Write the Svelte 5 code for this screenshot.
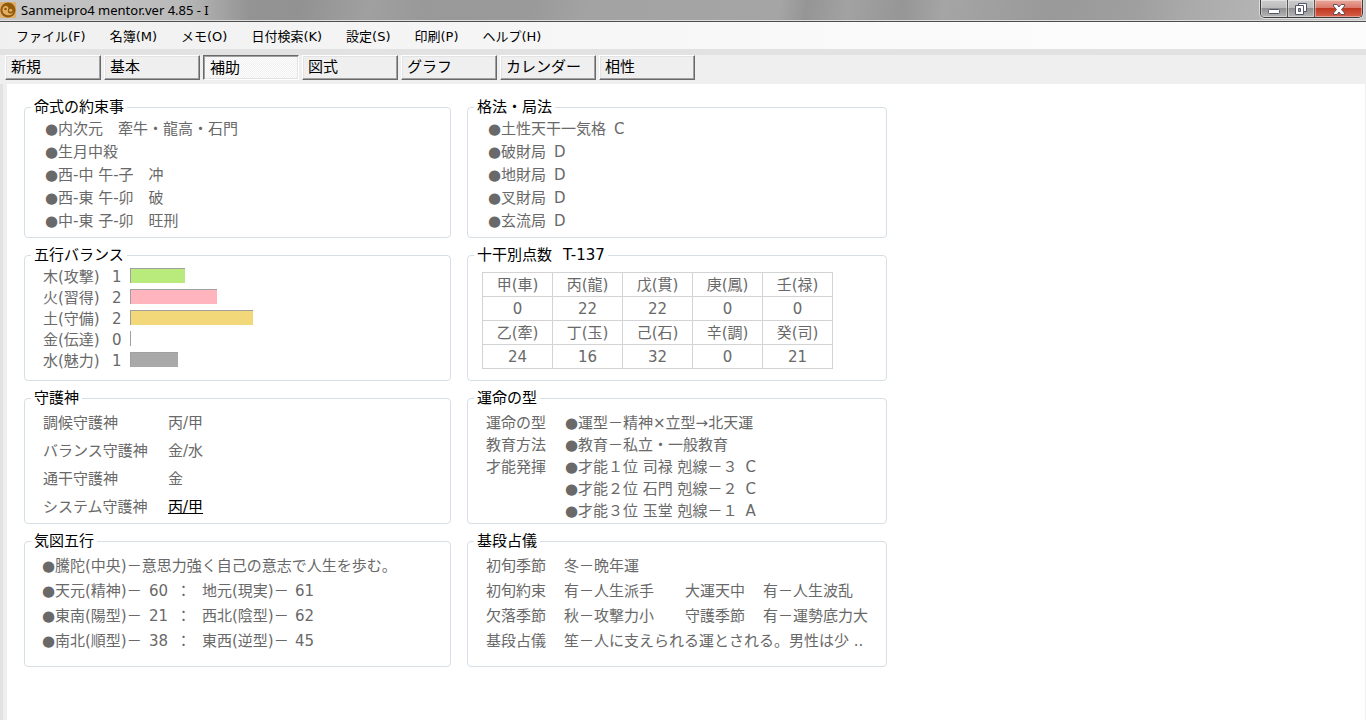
<script>
  const menus = ['ファイル(F)', '名簿(M)', 'メモ(O)', '日付検索(K)', '設定(S)', '印刷(P)', 'ヘルプ(H)'];
  const tabs = ['新規', '基本', '補助', '図式', 'グラフ', 'カレンダー', '相性'];
  let active = $state('補助');

  const promises = ['内次元　牽牛・龍高・石門', '生月中殺', '西-中 午-子　冲', '西-東 午-卯　破', '中-東 子-卯　旺刑'];
  const patterns = [
    ['土性天干一気格', 'C'],
    ['破財局', 'D'],
    ['地財局', 'D'],
    ['叉財局', 'D'],
    ['玄流局', 'D']
  ];
  const balance = [
    { name: '木(攻撃)', count: 1, size: 55, color: '#b9eb7c' },
    { name: '火(習得)', count: 2, size: 87, color: '#ffb4be' },
    { name: '土(守備)', count: 2, size: 123, color: '#f2d879' },
    { name: '金(伝達)', count: 0, size: 1, color: '#ffffff' },
    { name: '水(魅力)', count: 1, size: 48, color: '#a9a9a9' }
  ];
  const scores = [
    ['甲(車)', '丙(龍)', '戊(貫)', '庚(鳳)', '壬(禄)'],
    [0, 22, 22, 0, 0],
    ['乙(牽)', '丁(玉)', '己(石)', '辛(調)', '癸(司)'],
    [24, 16, 32, 0, 21]
  ];
  const guardians = [
    ['調候守護神', '丙/甲'],
    ['バランス守護神', '金/水'],
    ['通干守護神', '金'],
    ['システム守護神', '丙/甲']
  ];
  const fate = [
    ['運命の型', '運型－精神×立型→北天運', ''],
    ['教育方法', '教育－私立・一般教育', ''],
    ['才能発揮', '才能１位 司禄 剋線－３', 'C'],
    ['', '才能２位 石門 剋線－２', 'C'],
    ['', '才能３位 玉堂 剋線－１', 'A']
  ];
  const energy = [
    ['天元(精神)－', 60, '地元(現実)－', 61],
    ['東南(陽型)－', 21, '西北(陰型)－', 62],
    ['南北(順型)－', 38, '東西(逆型)－', 45]
  ];
  const stages = [
    ['初旬季節', '冬－晩年運'],
    ['初旬約束', '有－人生派手', '大運天中', '有－人生波乱'],
    ['欠落季節', '秋－攻撃力小', '守護季節', '有－運勢底力大'],
    ['基段占儀', '笙－人に支えられる運とされる。男性は少 ..']
  ];
</script>

{#snippet dot()}<span class="dot">●</span>{/snippet}

<div class="window">
  <header class="titlebar">
    <svg class="logo" width="16" height="16" viewBox="0 0 16 16" aria-hidden="true">
      <rect width="16" height="16" fill="#dcae74" />
      <circle cx="8" cy="8" r="7.6" fill="#945a05" />
      <path d="M2.500 8.500C2.300 5 4.500 3.500 6.500 4c2 .5 2.300 2.500 1.500 4-.8 1.600.2 3.600 2.500 3.600 1.800 0 3-1.200 3.300-2.600C13.500 12 11 13.500 8 13.300 5 13 2.700 11.300 2.500 8.500z" fill="#e2b06c" />
      <circle cx="5.500" cy="7" r="1.300" fill="#945a05" />
      <circle cx="10.700" cy="8.200" r="1.500" fill="#e2b06c" />
    </svg>
    <span class="title">Sanmeipro4 mentor.ver 4.85 - I</span>
    <div class="controls">
      <button aria-label="最小化">
        <svg width="14" height="14" viewBox="0 0 14 14"><rect x="1.500" y="7.500" width="11" height="4" rx="1" fill="#fff" stroke="#50566a" /></svg>
      </button>
      <button aria-label="元に戻す">
        <svg width="14" height="14" viewBox="0 0 14 14">
          <path d="M4.500 1.500h8v8h-8z" fill="#fff" stroke="#50566a" />
          <path d="M1.500 3.500h8v9h-8z" fill="#fff" stroke="#50566a" />
          <path d="M4.500 6.500h2v3h-2z" fill="#aaa" stroke="#50566a" />
        </svg>
      </button>
      <button class="close" aria-label="閉じる">
        <svg width="14" height="14" viewBox="0 0 14 14"><path d="M1.500 2.500h3.500l2 2.500 2-2.500h3.500v1.500l-3 3.500 3 3.500v1.500H9L7 10l-2 2.500H1.500V11l3-3.500-3-3.500z" fill="#fff" stroke="#5a5060" /></svg>
      </button>
    </div>
  </header>

  <nav class="menubar">
    {#each menus as m}<button>{m}</button>{/each}
  </nav>

  <div class="toolbar">
    {#each tabs as t}
      <button class:pressed={active === t} aria-pressed={active === t} onclick={() => (active = t)}>{t}</button>
    {/each}
  </div>

  <main>
    <div class="panels">
      <fieldset>
        <legend>命式の約束事</legend>
        <ul class="notes">
          {#each promises as p}<li>{@render dot()}{p}</li>{/each}
        </ul>
      </fieldset>

      <fieldset>
        <legend>格法・局法</legend>
        <ul class="notes">
          {#each patterns as [name, rank]}<li>{@render dot()}{name}<span class="rank">{rank}</span></li>{/each}
        </ul>
      </fieldset>

      <fieldset>
        <legend>五行バランス</legend>
        <div class="balance">
          {#each balance as b}
            <span>{b.name}</span>
            <span>{b.count}</span>
            <div class="bar" style="width: {b.size}px; background: {b.color}"></div>
          {/each}
        </div>
      </fieldset>

      <fieldset>
        <legend>十干別点数<span class="total">T-137</span></legend>
        <table>
          <tbody>
            {#each scores as row, i}
              <tr>
                {#each row as cell}
                  {#if i % 2 === 0}<th>{cell}</th>{:else}<td>{cell}</td>{/if}
                {/each}
              </tr>
            {/each}
          </tbody>
        </table>
      </fieldset>

      <fieldset>
        <legend>守護神</legend>
        <dl class="guardians">
          {#each guardians as [name, value], i}
            <dt>{name}</dt>
            <dd><span class:strong={i === 3}>{value}</span></dd>
          {/each}
        </dl>
      </fieldset>

      <fieldset>
        <legend>運命の型</legend>
        <dl class="fate">
          {#each fate as [name, text, rank]}
            <dt>{name}</dt>
            <dd>{@render dot()}{text}{#if rank}<span class="rank">{rank}</span>{/if}</dd>
          {/each}
        </dl>
      </fieldset>

      <fieldset>
        <legend>気図五行</legend>
        <div class="energy">
          <p>{@render dot()}騰陀(中央)－意思力強く自己の意志で人生を歩む。</p>
          {#each energy as [a, av, b, bv]}
            <span>{@render dot()}{a}</span>
            <span>{av}</span>
            <span>：</span>
            <span>{b}</span>
            <span>{bv}</span>
          {/each}
        </div>
      </fieldset>

      <fieldset>
        <legend>基段占儀</legend>
        <div class="stages">
          {#each stages as row}
            {#each row as cell, i}
              <span class:wide={row.length === 2 && i === 1}>{cell}</span>
            {/each}
          {/each}
        </div>
      </fieldset>
    </div>
  </main>
</div>

<style>
  :global(body) {
    margin: 0;
    background: #fff;
  }
  .window,
  .window button {
    font-family: 'DejaVu Sans', 'Noto Sans CJK JP', sans-serif;
  }
  .window {
    display: flex;
    flex-direction: column;
    min-height: 100vh;
    font-size: 15px;
    color: #696969;
  }
  .titlebar {
    display: flex;
    align-items: center;
    gap: 5px;
    height: 20px;
    border-bottom: 1px solid #ddd;
    box-shadow: 0 1px 0 #4f4f4f;
    margin-bottom: 1px;
    background:
      linear-gradient(90deg, rgba(205, 205, 205, 0.9) 0, rgba(195, 195, 195, 0.8) 180px, rgba(180, 180, 180, 0) 250px),
      linear-gradient(100deg, #999 0, #929292 22%, #a0a0a0 27%, #999 31%, #9a9a9a 39%, #a3a3a3 43%, #a5a5a5 57%, #959595 59%, #a2a2a2 62%, #969696 66%, #a5a5a5 69%, #999 77%, #9f9f9f 83%, #aaa 87%, #b4b4b4 92%, #c8c8c8 100%);
  }
  .title {
    font-family: 'Noto Sans', 'Noto Sans CJK JP', sans-serif;
    font-size: 13px;
    line-height: 20px;
    color: #000;
  }
  .controls {
    display: flex;
    align-self: flex-start;
    margin-left: auto;
    margin-right: 3px;
    border: 1px solid #3c3c3c;
    border-top: 0;
    border-radius: 0 0 5px 5px;
    overflow: hidden;
    box-shadow: 0 0 0 1px #ddd;
  }
  .controls button {
    display: flex;
    align-items: center;
    justify-content: center;
    width: 27px;
    height: 17px;
    padding: 0;
    border: 0;
    border-right: 1px solid #555;
    background: linear-gradient(#ccc 0, #bbb 48%, #919191 50%, #b5b5b5 100%);
    box-shadow: inset 0 0 0 1px rgba(255, 255, 255, 0.4);
  }
  .controls .close {
    width: 47px;
    border-right: 0;
    background: linear-gradient(#e9a99b 0, #d9776a 48%, #c03820 50%, #d8604a 100%);
  }
  .menubar {
    display: flex;
    gap: 24px;
    height: 27px;
    padding-left: 16px;
    background: linear-gradient(90deg, #f0f0f0, #fcfcfc 80%);
  }
  .menubar button {
    padding: 0;
    border: 0;
    background: none;
    font-size: 13px;
    color: #000;
    white-space: nowrap;
  }
  .toolbar {
    display: flex;
    gap: 3px;
    height: 29px;
    padding-left: 5px;
    border-top: 6px solid #e2e2e2;
    background: #efefef;
  }
  .toolbar button {
    width: 96px;
    height: 25px;
    padding: 0 5px 2px;
    border: 1px solid;
    border-color: #fff #696969 #696969 #fff;
    background: #efefef;
    box-shadow: inset -1px -1px 0 #a0a0a0, inset 1px 1px 0 #e3e3e3;
    font-size: 15px;
    line-height: 20px;
    text-align: left;
    color: #000;
  }
  .toolbar .pressed {
    padding: 0 5px 0 6px;
    border-color: #696969 #fff #fff #696969;
    background: repeating-conic-gradient(#efefef 0 25%, #fff 0 50%) 0 0 / 2px 2px;
    box-shadow: inset 1px 1px 0 #a0a0a0, inset -1px -1px 0 #e3e3e3;
  }
  main {
    flex: 1;
    margin-left: 3px;
    padding: 13px 17px 17px;
    border-left: 4px solid #efefef;
    border-right: 1px solid #efefef;
    box-shadow: -3px 0 0 #e2e2e2;
    background: #fff;
  }
  .panels {
    display: grid;
    grid-template-columns: 427fr 420fr;
    gap: 7px 16px;
    max-width: 863px;
  }
  fieldset {
    min-width: 0;
    margin: 0;
    padding: 0;
    border: 1px solid #d5dfe5;
    border-radius: 4px;
    white-space: nowrap;
  }
  legend {
    margin-left: 6px;
    padding: 0 3px;
    line-height: 20px;
    color: #000;
  }
  .total {
    margin-left: 11px;
  }
  ul,
  dl,
  p {
    margin: 0;
    padding: 0;
    list-style: none;
  }
  dd {
    margin: 0;
  }
  .dot {
    display: inline-block;
    width: 13px;
  }
  .rank {
    margin-left: 8px;
  }
  .notes {
    padding: 1px 0 4px 20px;
    line-height: 23px;
  }
  .balance {
    display: grid;
    grid-template-columns: 69px 18px 1fr;
    padding: 2px 0 8px 18px;
    line-height: 21px;
  }
  .bar {
    box-sizing: border-box;
    height: 15px;
    margin-top: 1px;
    border-top: 1px solid #a0a0a0;
    border-left: 1px solid #a0a0a0;
  }
  table {
    margin: 7px 0 11px 14px;
    border-collapse: collapse;
    table-layout: fixed;
    width: 351px;
  }
  th,
  td {
    height: 23px;
    padding: 2px 0 0;
    border: 1px solid #d3d3d3;
    box-sizing: border-box;
    font-weight: 400;
    line-height: 21px;
    text-align: center;
  }
  .guardians {
    display: grid;
    grid-template-columns: 125px 1fr;
    padding: 1px 0 2px 18px;
    line-height: 28px;
  }
  .strong {
    color: #000;
    text-decoration: underline;
  }
  .fate {
    display: grid;
    grid-template-columns: 79px 1fr;
    grid-auto-rows: 22px;
    padding: 4px 0 1px 18px;
    line-height: 22px;
  }
  .energy {
    display: grid;
    grid-template-columns: 107px 27px 26px 93px 1fr;
    padding: 3px 0 12px 17px;
    line-height: 25px;
  }
  .energy p {
    grid-column: 1 / -1;
  }
  .stages {
    display: grid;
    grid-template-columns: 78px 121px 78px 1fr;
    padding: 3px 0 12px 18px;
    line-height: 25px;
  }
  .wide {
    grid-column: 2 / -1;
  }
</style>
